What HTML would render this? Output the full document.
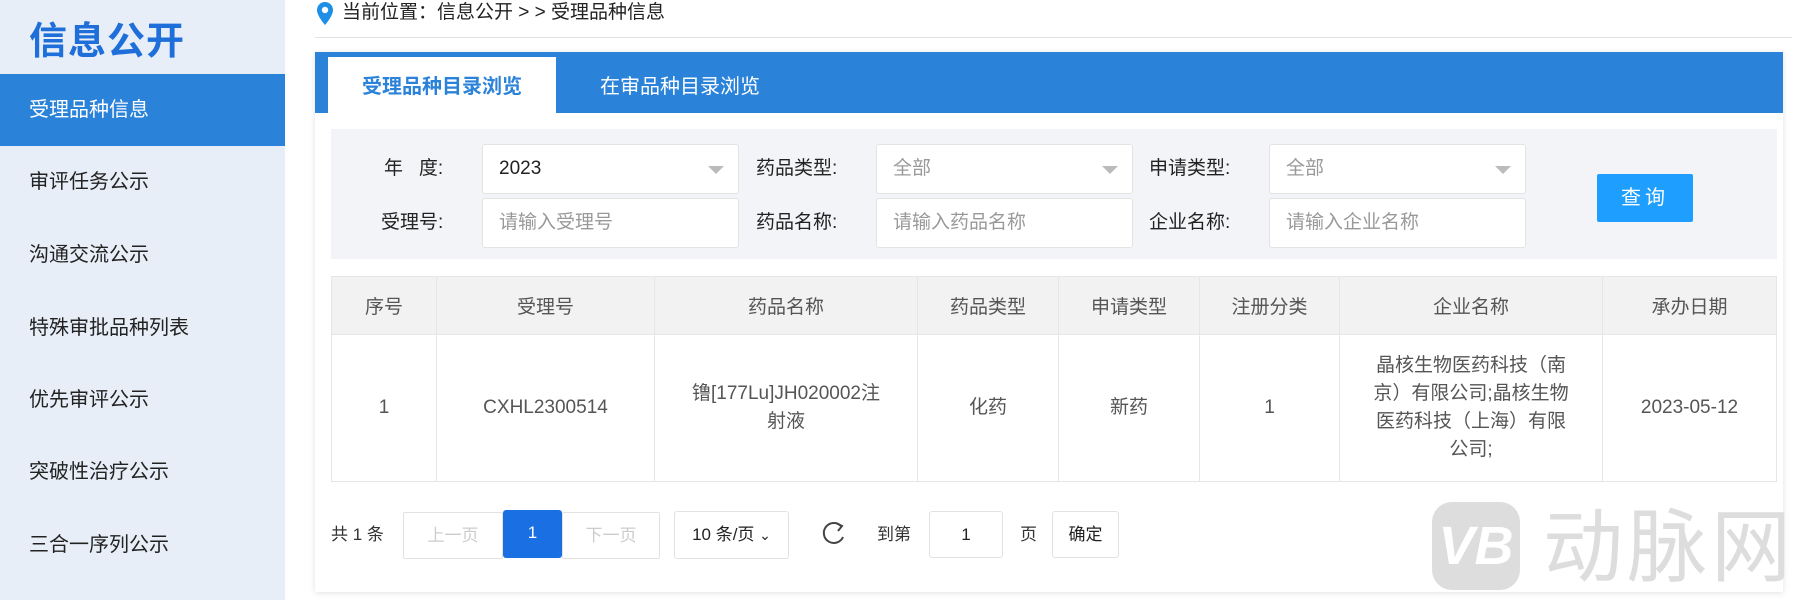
<!DOCTYPE html>
<html><head><meta charset="utf-8"><style>
*{margin:0;padding:0;box-sizing:border-box}
body{width:1800px;height:600px;overflow:hidden;background:#fff;font-family:"Liberation Sans","Noto Sans CJK SC",sans-serif;color:#333;position:relative}
.side{position:absolute;left:0;top:0;width:285px;height:600px;background:#e8eef7}
.side h1{position:absolute;left:29px;top:10px;font-size:38px;color:#1e6fd9;font-weight:bold;letter-spacing:1px}
.item{position:absolute;left:0;width:285px;height:72px;line-height:72px;padding-left:29px;font-size:20px;color:#222}
.item.on{background:#2b82d9;color:#fff}
.abs{position:absolute;white-space:nowrap}
.crumb{left:315px;top:0;font-size:19px;color:#222;line-height:26px}
.line{left:315px;top:37px;width:1477px;height:1px;background:#e2e2e2}
.panel{left:315px;top:52px;width:1468px;height:540px;background:#fff;box-shadow:0 1px 6px rgba(0,0,0,.12)}
.tabbar{left:315px;top:52px;width:1468px;height:61px;background:#2b82d9}
.tab1{left:328px;top:57px;width:228px;height:56px;background:#fff;color:#2b82d9;font-weight:bold;font-size:20px;text-align:center;line-height:60px}
.tab2{left:600px;top:57px;width:175px;height:56px;color:#fff;font-size:20px;line-height:60px}
.filter{left:331px;top:129px;width:1446px;height:130px;background:#f3f4f7}
.lbl{font-size:19px;color:#222;line-height:50px}
.inp{background:#fff;border:1px solid #e3e3e3;border-radius:3px;height:50px;width:257px;line-height:48px;padding-left:16px;font-size:19px;color:#999}
.inp.dark{color:#222}
.arr{position:absolute;right:14px;top:21px;width:0;height:0;border-left:8px solid transparent;border-right:8px solid transparent;border-top:8px solid #bbb}
.btn{left:1597px;top:174px;width:96px;height:48px;background:#1e9fff;color:#fff;font-size:20px;text-align:center;line-height:48px;border-radius:2px;letter-spacing:4px}
table{position:absolute;left:331px;top:276px;width:1446px;border-collapse:collapse;font-size:19px;color:#555;table-layout:fixed}
td,th{border:1px solid #e6e6e6;text-align:center;font-weight:normal}
th{background:#f2f2f2;height:58px}
td{height:147px;line-height:28px;padding:0 20px}
.pg{font-size:17px;line-height:45px;text-align:center}
.bx{border:1px solid #e2e2e2;background:#fff;border-radius:2px}
</style></head><body>
<div class="side">
<h1>信息公开</h1>
<div class="item on" style="top:74px">受理品种信息</div>
<div class="item" style="top:146px">审评任务公示</div>
<div class="item" style="top:219px">沟通交流公示</div>
<div class="item" style="top:292px">特殊审批品种列表</div>
<div class="item" style="top:364px">优先审评公示</div>
<div class="item" style="top:436px">突破性治疗公示</div>
<div class="item" style="top:509px">三合一序列公示</div>
</div>
<svg class="abs" style="left:316px;top:1px" width="18" height="25" viewBox="0 0 18 25"><path d="M9 1C4.5 1 1 4.5 1 9c0 6 8 15 8 15s8-9 8-15C17 4.5 13.5 1 9 1z" fill="#1e8fe6"/><circle cx="9" cy="9" r="3.2" fill="#fff"/></svg>
<div class="abs crumb" style="left:342px">当前位置：信息公开 &gt; &gt; 受理品种信息</div>
<div class="abs line"></div>
<div class="abs panel"></div>
<div class="abs tabbar"></div>
<div class="abs tab1">受理品种目录浏览</div>
<div class="abs tab2">在审品种目录浏览</div>
<div class="abs filter"></div>
<div class="abs lbl" style="left:384px;top:144px">年&nbsp;&nbsp;&nbsp;度:</div>
<div class="abs lbl" style="left:381px;top:198px">受理号:</div>
<div class="abs lbl" style="left:756px;top:144px">药品类型:</div>
<div class="abs lbl" style="left:756px;top:198px">药品名称:</div>
<div class="abs lbl" style="left:1149px;top:144px">申请类型:</div>
<div class="abs lbl" style="left:1149px;top:198px">企业名称:</div>
<div class="abs inp dark" style="left:482px;top:144px">2023<span class="arr"></span></div>
<div class="abs inp" style="left:482px;top:198px">请输入受理号</div>
<div class="abs inp" style="left:876px;top:144px">全部<span class="arr"></span></div>
<div class="abs inp" style="left:876px;top:198px">请输入药品名称</div>
<div class="abs inp" style="left:1269px;top:144px">全部<span class="arr"></span></div>
<div class="abs inp" style="left:1269px;top:198px">请输入企业名称</div>
<div class="abs btn">查询</div>
<table>
<tr><th style="width:105px">序号</th><th style="width:218px">受理号</th><th style="width:263px">药品名称</th><th style="width:141px">药品类型</th><th style="width:141px">申请类型</th><th style="width:140px">注册分类</th><th style="width:263px">企业名称</th><th>承办日期</th></tr>
<tr><td>1</td><td>CXHL2300514</td><td style="padding:0 30px">镥[177Lu]JH020002注射液</td><td>化药</td><td>新药</td><td>1</td><td style="padding:0 30px">晶核生物医药科技（南京）有限公司;晶核生物医药科技（上海）有限公司;</td><td>2023-05-12</td></tr>
</table>
<div class="abs pg" style="left:331px;top:512px;color:#333">共 1 条</div>
<div class="abs pg bx" style="left:403px;top:512px;width:100px;color:#ccc">上一页</div>
<div class="abs pg" style="left:503px;top:510px;width:59px;height:48px;background:#1a6fe3;color:#fff;border-radius:3px">1</div>
<div class="abs pg bx" style="left:562px;top:512px;width:98px;color:#ccc">下一页</div>
<div class="abs pg bx" style="left:674px;top:511px;width:115px;color:#222;border-radius:3px">10 条/页 <span style="font-size:14px">&#8964;</span></div>
<svg class="abs" style="left:821px;top:520px" width="26" height="28" viewBox="0 0 26 28"><path d="M20 6A10 10 0 1 0 22 17" fill="none" stroke="#444" stroke-width="2"/><path d="M15 3l6 3-4 5" fill="none" stroke="#444" stroke-width="2"/></svg>
<div class="abs pg" style="left:877px;top:512px;color:#333">到第</div>
<div class="abs pg bx" style="left:929px;top:511px;width:74px;color:#222;border-radius:3px">1</div>
<div class="abs pg" style="left:1020px;top:512px;color:#333">页</div>
<div class="abs pg bx" style="left:1052px;top:511px;width:67px;color:#222;border-radius:3px">确定</div>
<div class="abs" style="left:1432px;top:502px;width:88px;height:88px;background:#ddd;border-radius:20px;color:#fff;font-weight:bold;font-size:54px;line-height:88px;text-align:center;font-style:italic">VB</div>
<div class="abs" style="left:1543px;top:500px;font-size:80px;color:#ddd;letter-spacing:4px;line-height:96px">动脉网</div>
</body></html>
